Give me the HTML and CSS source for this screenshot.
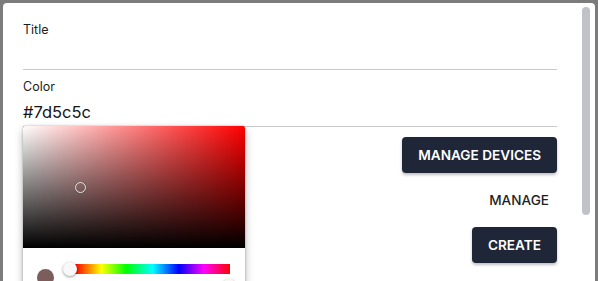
FILE: index.html
```html
<!DOCTYPE html>
<html>
<head>
<meta charset="utf-8">
<link rel="stylesheet" href="styles.css">
</head>
<body>
<div class="modal">
  <div class="content">
    <div class="field">
      <label class="label">Title</label>
      <div class="input empty"></div>
    </div>
    <div class="field color-field">
      <label class="label">Color</label>
      <div class="input value">#7d5c5c</div>
      <div class="picker">
        <div class="sat">
          <div class="sat-white"></div>
          <div class="sat-black"></div>
          <div class="cursor"></div>
        </div>
        <div class="picker-body">
          <div class="swatch"></div>
          <div class="sliders">
            <div class="hue"><div class="hue-thumb"></div></div>
            <div class="alpha"><div class="alpha-thumb"></div></div>
          </div>
        </div>
      </div>
    </div>
    <div class="actions">
      <button class="btn dark">MANAGE DEVICES</button>
      <button class="btn text">MANAGE</button>
      <button class="btn dark">CREATE</button>
    </div>
  </div>
  <div class="scrollbar"><div class="thumb"></div></div>
</div>
</body>
</html>
```
FILE: styles.css
```css
html, body {
  margin: 0;
  padding: 0;
  height: 100%;
  overflow: hidden;
}
body {
  background: #7c7c7c;
  font-family: Inter, "Noto Sans", sans-serif;
  color: #1f1f1f;
}
.modal {
  margin: 3px 3px 0 3px;
  height: 320px;
  background: #fff;
  border-radius: 4px 4px 0 0;
  display: flex;
}
.content {
  flex: 1;
  padding: 19px 22px 0 20px;
  display: flex;
  flex-direction: column;
}
.field {
  display: flex;
  flex-direction: column;
}
.label {
  font-size: 12.5px;
  line-height: 16px;
  color: #1c1c1c;
}
.input {
  border-bottom: 1px solid #c9c9c9;
}
.input.empty {
  height: 31px;
}
.color-field {
  margin-top: 9px;
  position: relative;
}
.input.value {
  margin-top: 6px;
  font-size: 16.5px;
  line-height: 22px;
  height: 25px;
  color: #151515;
}
.picker {
  position: absolute;
  left: 0;
  top: 47px;
  width: 222px;
  height: 180px;
  background: #fff;
  border-radius: 2px;
  box-shadow: 0 0 2px rgba(0,0,0,0.3), 0 4px 8px rgba(0,0,0,0.3);
  overflow: hidden;
  z-index: 2;
}
.sat {
  position: relative;
  height: 122px;
  background: #ff0000;
}
.sat-white {
  position: absolute;
  inset: 0;
  background: linear-gradient(to right, #fff, rgba(255,255,255,0));
}
.sat-black {
  position: absolute;
  inset: 0;
  background: linear-gradient(to top, #000, rgba(0,0,0,0));
}
.cursor {
  position: absolute;
  left: 52px;
  top: 56px;
  width: 9px;
  height: 9px;
  border: 1.5px solid #e6e6e6;
  border-radius: 50%;
  box-shadow: 0 0 1px rgba(0,0,0,0.4);
}
.picker-body {
  display: flex;
  padding: 16px 15px 0 15px;
  gap: 21px;
}
.swatch {
  flex: none;
  width: 17px;
  height: 17px;
  border-radius: 50%;
  background: #7d5c5c;
  margin-top: 5px;
  margin-left: -1px;
}
.sliders {
  flex: 1;
  display: flex;
  flex-direction: column;
  gap: 8px;
}
.hue {
  position: relative;
  height: 10px;
  background: linear-gradient(to right, #f00 0%, #ff0 17%, #0f0 33%, #0ff 50%, #00f 67%, #f0f 83%, #f00 100%);
}
.hue-thumb {
  position: absolute;
  left: -12px;
  top: -2px;
  width: 14px;
  height: 14px;
  border-radius: 50%;
  background: #f8f8f8;
  box-shadow: 0 1px 3px rgba(0,0,0,0.4);
}
.alpha {
  position: relative;
  height: 10px;
}
.alpha-thumb {
  position: absolute;
  right: -6px;
  top: -3px;
  width: 14px;
  height: 14px;
  border-radius: 50%;
  background: #f8f8f8;
  box-shadow: 0 1px 3px rgba(0,0,0,0.4);
}
.actions {
  margin-top: 10px;
  display: flex;
  flex-direction: column;
  align-items: flex-end;
  gap: 9px;
}
.btn {
  font-family: Inter, "Noto Sans", sans-serif;
  font-size: 13.6px;
  font-weight: 600;
  height: 36px;
  border: none;
  border-radius: 4px;
  padding: 0 16px;
  cursor: pointer;
  letter-spacing: 0;
}
.btn.dark {
  background: #1f2638;
  color: #fff;
  box-shadow: 0 2px 3px rgba(0,0,0,0.25);
}
.btn.text {
  background: transparent;
  color: #1f1f1f;
  font-weight: 500;
  padding: 0 8px;
}
.scrollbar {
  width: 16px;
  flex: none;
}
.thumb {
  margin: 4px 0 0 3px;
  width: 8px;
  height: 208px;
  border-radius: 4px;
  background: #c1c1c8;
}
```
